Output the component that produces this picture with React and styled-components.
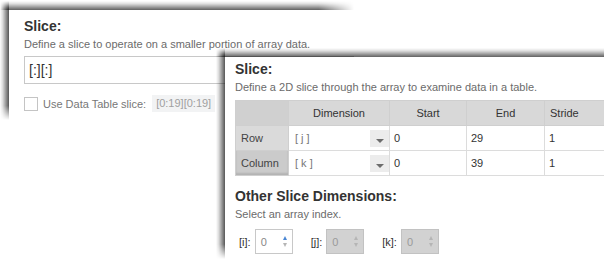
import React from "react";
import styled, { createGlobalStyle, css } from "styled-components";

const Global = createGlobalStyle`
  html, body { margin: 0; padding: 0; background: #fff; }
  body { font-family: "Liberation Sans", Arial, sans-serif; color: #333; }
  * { box-sizing: border-box; }
`;

const Stage = styled.div`
  position: relative;
  width: 604px;
  height: 259px;
  overflow: hidden;
  background: #fff;
`;

const Window = styled.section`
  position: absolute;
  left: ${(p) => p.$x}px;
  top: ${(p) => p.$y}px;
  width: ${(p) => p.$w}px;
  height: ${(p) => p.$h}px;
  background: #fff;
  z-index: ${(p) => p.$z};
  padding: ${(p) => p.$pad};
  display: flex;
  flex-direction: column;

  &::before {
    content: "";
    position: absolute;
    left: -9px;
    right: 0;
    top: -9px;
    height: 9px;
    background: linear-gradient(to top, rgba(0, 0, 0, 0.62), rgba(0, 0, 0, 0.12) 70%, rgba(0, 0, 0, 0));
    -webkit-mask-image: linear-gradient(to right, transparent 0, #000 9px, #000 ${(p) => p.$topFade}, transparent 100%);
    mask-image: linear-gradient(to right, transparent 0, #000 9px, #000 ${(p) => p.$topFade}, transparent 100%);
  }
  &::after {
    content: "";
    position: absolute;
    left: -9px;
    width: 9px;
    top: -9px;
    bottom: 0;
    background: linear-gradient(to left, rgba(0, 0, 0, 0.66), rgba(0, 0, 0, 0.14) 70%, rgba(0, 0, 0, 0));
    -webkit-mask-image: linear-gradient(to bottom, transparent 0, #000 9px, #000 ${(p) => p.$leftFade}, transparent 100%);
    mask-image: linear-gradient(to bottom, transparent 0, #000 9px, #000 ${(p) => p.$leftFade}, transparent 100%);
  }
`;

const Heading = styled.h2`
  margin: 0;
  font-size: 14px;
  line-height: 16px;
  font-weight: bold;
  color: #333;
  margin-top: ${(p) => p.$mt || 0}px;
`;

const Hint = styled.p`
  margin: 0;
  margin-top: ${(p) => p.$mt || 0}px;
  font-size: 11px;
  line-height: 13px;
  color: #6b6b6b;
`;

const SliceInput = styled.div`
  margin-top: 5px;
  height: 28px;
  width: 330px;
  border: 1px solid #c8c8c8;
  display: flex;
  align-items: center;
  padding-left: 4px;
  font-size: 14px;
  color: #333;
`;

const CheckRow = styled.label`
  margin-top: 11px;
  display: flex;
  align-items: center;
  gap: 5px;
  font-size: 11px;
  color: #777;
`;

const Box = styled.span`
  width: 14px;
  height: 14px;
  border: 1px solid #c4c4c4;
  background: #fff;
`;

const Chip = styled.span`
  margin-left: 1px;
  padding: 2px 4px;
  background: #f2f3f4;
  color: #a0a0a0;
  font-size: 11px;
  line-height: 13px;
`;

const Table = styled.table`
  margin-top: 6px;
  border-collapse: collapse;
  font-size: 11px;
  color: #333;
  table-layout: fixed;
  width: 400px;
`;

const Th = styled.th`
  height: 25px;
  padding: ${(p) => (p.$left ? "0 0 0 5px" : "0")};
  font-weight: normal;
  text-align: ${(p) => (p.$left ? "left" : "center")};
  background: #d8d8d8;
  border: 1px solid #cfcfcf;
  border-left-color: #f0f0f0;
  ${(p) => p.$corner && css`background: #d0d0d0; border-left-color: #cfcfcf;`}
`;

const RowHead = styled.th`
  height: 25px;
  padding: 0 0 0 5px;
  text-align: left;
  font-weight: normal;
  color: #444;
  background: ${(p) => (p.$active ? "#cbcbcb" : "#dadada")};
  border: 1px solid #cfcfcf;
  ${(p) => p.$active && css`box-shadow: inset 0 -2px 2px rgba(0,0,0,0.12);`}
`;

const Td = styled.td`
  height: 25px;
  padding: 0 0 0 4px;
  border: 1px solid #dcdcdc;
  background: #fff;
`;

const DimCell = styled.td`
  height: 25px;
  padding: 0;
  border: 1px solid #dcdcdc;
  background: #fff;
`;

const Select = styled.div`
  display: flex;
  align-items: center;
  justify-content: space-between;
  padding-left: 6px;
  color: #777;
  height: 24px;
`;

const DropBtn = styled.span`
  width: 19px;
  height: 17px;
  margin-top: 1px;
  background: #ececec;
  display: flex;
  align-items: flex-end;
  justify-content: center;
  padding-bottom: 4px;
  &::after {
    content: "";
    border-left: 4px solid transparent;
    border-right: 4px solid transparent;
    border-top: 4px solid #6c6c6c;
  }
`;

const IndexRow = styled.div`
  margin-top: 8px;
  padding-left: 4px;
  display: flex;
  align-items: center;
  gap: 18px;
`;

const IndexItem = styled.div`
  display: flex;
  align-items: center;
  gap: 4px;
  font-size: 11px;
  color: #333;
`;

const Spin = styled.div`
  width: 38px;
  height: 25px;
  border: 1px solid ${(p) => (p.$disabled ? "#c2c2c2" : "#c8c8c8")};
  background: ${(p) => (p.$disabled ? "#d2d2d2" : "#fff")};
  display: flex;
  align-items: center;
  justify-content: space-between;
  padding: 0 5px 0 5px;
  font-size: 11px;
  color: ${(p) => (p.$disabled ? "#9a9a9a" : "#888")};
`;

const Arrows = styled.span`
  display: flex;
  flex-direction: column;
  gap: 3px;
  &::before, &::after {
    content: "";
    border-left: 2.5px solid transparent;
    border-right: 2.5px solid transparent;
  }
  &::before {
    border-bottom: 4px solid ${(p) => p.$up};
  }
  &::after {
    border-top: 4px solid #b5b5b5;
  }
`;

function Spinner({ disabled, active }) {
  return (
    <Spin $disabled={disabled}>
      <span>0</span>
      <Arrows $up={active ? "#4a86d4" : "#b5b5b5"} />
    </Spin>
  );
}

export default function App() {
  return (
    <>
      <Global />
      <Stage>
        <Window $x={9} $y={10} $w={345} $h={110} $z={1} $pad="8px 0 0 15px" $topFade="90%" $leftFade="88%">
          <Heading>Slice:</Heading>
          <Hint $mt={4}>Define a slice to operate on a smaller portion of array data.</Hint>
          <SliceInput>[:][:]</SliceInput>
          <CheckRow>
            <Box />
            Use Data Table slice:
            <Chip>[0:19][0:19]</Chip>
          </CheckRow>
        </Window>

        <Window $x={225} $y={57} $w={400} $h={202} $z={2} $pad="4px 0 0 10px" $topFade="100%" $leftFade="93%">
          <Heading>Slice:</Heading>
          <Hint $mt={4}>Define a 2D slice through the array to examine data in a table.</Hint>
          <Table>
            <colgroup>
              <col style={{ width: 53 }} />
              <col style={{ width: 101 }} />
              <col style={{ width: 77 }} />
              <col style={{ width: 78 }} />
              <col style={{ width: 91 }} />
            </colgroup>
            <thead>
              <tr>
                <Th $corner />
                <Th>Dimension</Th>
                <Th>Start</Th>
                <Th>End</Th>
                <Th $left>Stride</Th>
              </tr>
            </thead>
            <tbody>
              <tr>
                <RowHead>Row</RowHead>
                <DimCell>
                  <Select>
                    [ j ]<DropBtn />
                  </Select>
                </DimCell>
                <Td>0</Td>
                <Td>29</Td>
                <Td>1</Td>
              </tr>
              <tr>
                <RowHead $active>Column</RowHead>
                <DimCell>
                  <Select>
                    [ k ]<DropBtn />
                  </Select>
                </DimCell>
                <Td>0</Td>
                <Td>39</Td>
                <Td>1</Td>
              </tr>
            </tbody>
          </Table>
          <Heading $mt={12}>Other Slice Dimensions:</Heading>
          <Hint $mt={4}>Select an array index.</Hint>
          <IndexRow>
            <IndexItem>
              [i]:<Spinner active />
            </IndexItem>
            <IndexItem>
              [j]:<Spinner disabled />
            </IndexItem>
            <IndexItem>
              [k]:<Spinner disabled />
            </IndexItem>
          </IndexRow>
        </Window>
      </Stage>
    </>
  );
}
